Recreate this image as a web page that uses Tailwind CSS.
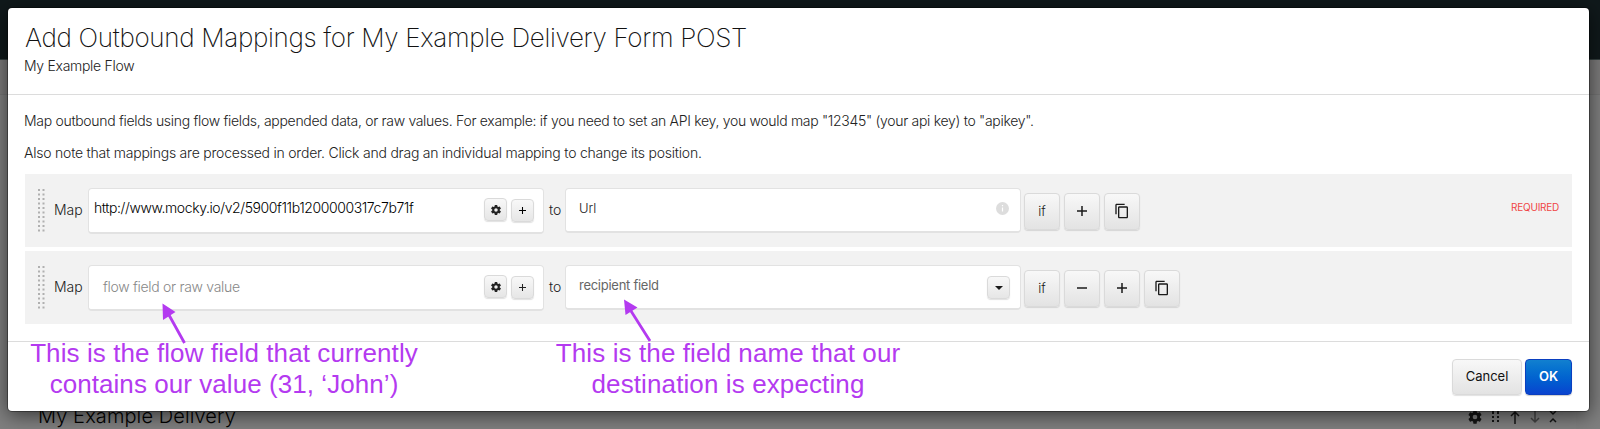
<!DOCTYPE html>
<html lang="en">
<head>
<meta charset="utf-8">
<title>Add Outbound Mappings</title>
<script src="https://cdn.jsdelivr.net/npm/@tailwindcss/browser@4"></script>
</head>
<body class="relative h-[429px] w-[1600px] overflow-hidden bg-[#7f7f7f] font-['Inter',sans-serif] text-[#222]">
<svg class="hidden">
  <symbol id="gear" viewBox="0 0 24 24"><path fill-rule="evenodd" d="M19.43 12.98c.04-.32.07-.64.07-.98s-.03-.66-.07-.98l2.11-1.65c.19-.15.24-.42.12-.64l-2-3.46c-.12-.22-.39-.3-.61-.22l-2.49 1c-.52-.4-1.08-.73-1.69-.98l-.38-2.65C14.46 2.18 14.25 2 14 2h-4c-.25 0-.46.18-.49.42l-.38 2.65c-.61.25-1.17.59-1.69.98l-2.49-1c-.23-.09-.49 0-.61.22l-2 3.46c-.13.22-.07.49.12.64l2.11 1.65c-.04.32-.07.65-.07.98s.03.66.07.98l-2.11 1.65c-.19.15-.24.42-.12.64l2 3.46c.12.22.39.3.61.22l2.49-1c.52.4 1.08.73 1.69.98l.38 2.65c.03.24.24.42.49.42h4c.25 0 .46-.18.49-.42l.38-2.65c.61-.25 1.17-.59 1.69-.98l2.49 1c.23.09.49 0 .61-.22l2-3.46c.12-.22.07-.49-.12-.64l-2.11-1.65zM12 15.5a3.5 3.5 0 1 1 0-7 3.5 3.5 0 0 1 0 7z"/></symbol>
  <symbol id="copy" viewBox="0 0 24 24"><path d="M16 1H4c-1.100 0-2 .9-2 2v14h2V3h12V1zm3 4H8c-1.100 0-2 .9-2 2v14c0 1.100.9 2 2 2h11c1.100 0 2-.9 2-2V7c0-1.100-.9-2-2-2zm0 16H8V7h11v14z"/></symbol>
  <symbol id="plus" viewBox="0 0 10 10"><path d="M5 0v10M0 5h10" fill="none" stroke="currentColor" stroke-width="1.500"/></symbol>
</svg>

<header class="h-[60px] border-b border-[#354040] bg-[#10191b]"></header>
<div class="h-[35px] border-b border-[#747474] bg-[#7c7b7b]"></div>
<div class="ml-5 flex h-[334px] w-[1556px] items-end justify-between bg-[#818181] pr-[16px] pl-[18px]">
  <p class="mb-[1px] text-[20px] leading-[24px] font-light whitespace-nowrap text-black"><span class="tracking-[0.1px]">My Example Delivery</span></p>
  <div class="mb-[4px] flex items-center text-[#151515]">
    <svg class="size-[16px]" fill="currentColor"><use href="#gear"/></svg>
    <svg class="ml-[7px] size-[12px]" viewBox="0 0 12 12" fill="currentColor"><path d="M2 0h2v3H2zM7 0h2v3H7zM2 5h2v2H2zM7 5h2v2H7zM2 9h2v2H2zM7 9h2v2H7z"/></svg>
    <svg class="ml-[6px] size-[14px]" viewBox="0 0 14 14" fill="none" stroke="currentColor" stroke-width="1.500"><path d="M7 14V2M3 6l4-4 4 4"/></svg>
    <svg class="ml-[6px] size-[14px] text-[#444]" viewBox="0 0 14 14" fill="none" stroke="currentColor" stroke-width="1.500"><path d="M7 0v12M3 8l4 4 4-4"/></svg>
    <svg class="ml-[4px] size-[14px]" viewBox="0 0 14 14" fill="none" stroke="currentColor" stroke-width="1.500"><path d="M4 1l3 3 3-3M4 12l3-3 3 3"/></svg>
  </div>
</div>

<main class="absolute top-[8px] left-[8px] flex h-[403px] w-[1581px] flex-col rounded-[4px] bg-white shadow-[0_0_0_1px_rgba(0,0,0,0.35),0_4px_20px_rgba(0,0,0,0.6)]">
  <div class="h-[87px] border-b border-[#dcdcdc] pt-[14px] pl-[17px] whitespace-nowrap">
    <h1 class="h-[32px] text-[26px] leading-[32px] font-extralight tracking-[-0.325px] text-[#111]">Add Outbound Mappings for My Example Delivery Form POST</h1>
    <p class="mt-[2px] -ml-px text-[14px] leading-[20px] font-light tracking-[-0.3px]">My Example Flow</p>
  </div>
  <div class="h-[246px] px-[17px] pt-[16px] text-[14px] font-light whitespace-nowrap">
    <p class="-ml-px h-[20px] leading-[20px] tracking-[-0.305px]">Map outbound fields using flow fields, appended data, or raw values. For example: if you need to set an API key, you would map "12345" (your api key) to "apikey".</p>
    <p class="mt-[12px] -ml-px h-[20px] leading-[20px] tracking-[-0.22px]">Also note that mappings are processed in order. Click and drag an individual mapping to change its position.</p>

    <div class="mt-[11px] flex h-[73px] items-start bg-[#f2f2f2] pl-[13px]">
      <svg class="mt-[15px] h-[43px] w-[7px]" stroke="#b0b0b0" stroke-width="2" stroke-dasharray="2 2.500"><path d="M1 0v43M5.500 0v43"/></svg>
      <span class="mt-[26px] ml-[9px] w-[34px] text-[14px] leading-[20px]">Map</span>
      <div class="mt-[14px] flex h-[46px] w-[456px] rounded-[4px] border border-b-2 border-[#e2e2e2] bg-white pl-[5px] text-black">
        <span class="mt-[9px] w-[390px] text-[14px] leading-[20px] font-light tracking-[-0.41px]">http://www.mocky.io/v2/5900f11b1200000317c7b71f</span>
        <span class="mt-[9px] flex size-[23px] items-center justify-center rounded-[4px] border border-[#dadada] bg-linear-to-b from-[#f8f8f8] to-[#e6e6e6] shadow-[0_1px_1px_rgba(0,0,0,0.12)]"><svg class="size-[12px]" fill="#222"><use href="#gear"/></svg></span>
        <span class="mt-[10px] ml-[4px] flex size-[23px] items-center justify-center rounded-[4px] border border-[#dadada] bg-linear-to-b from-[#f8f8f8] to-[#e6e6e6] shadow-[0_1px_1px_rgba(0,0,0,0.12)]"><svg class="size-[7px]"><use href="#plus"/></svg></span>
      </div>
      <span class="mt-[26px] ml-[5px] w-[16px] leading-[20px]">to</span>
      <div class="mt-[14px] flex h-[45px] w-[456px] justify-between rounded-[4px] border border-b-2 border-[#e2e2e2] bg-white pr-[11px] pl-[13px]">
        <span class="mt-[9px] text-[13px] leading-[20px]">Url</span>
        <svg class="mt-[13px] size-[13px]" viewBox="0 0 13 13"><circle cx="6.500" cy="6.500" r="6.500" fill="#ddd"/><path d="M6.500 5.500v4M6.500 3v1.300" stroke="#fff" stroke-width="1.200"/></svg>
      </div>
      <div class="mt-[19px] ml-[3px] flex gap-[4px] text-[13px] text-[#1a1a1a]">
        <span class="flex h-[37px] w-[36px] items-center justify-center rounded-[4px] border border-[#dadada] bg-linear-to-b from-[#f8f8f8] to-[#e3e3e3] shadow-[0_1px_1px_rgba(0,0,0,0.12)]">if</span>
        <span class="flex h-[37px] w-[36px] items-center justify-center rounded-[4px] border border-[#dadada] bg-linear-to-b from-[#f8f8f8] to-[#e3e3e3] shadow-[0_1px_1px_rgba(0,0,0,0.12)]"><svg class="mb-px size-[10px]"><use href="#plus"/></svg></span>
        <span class="flex h-[37px] w-[36px] items-center justify-center rounded-[4px] border border-[#dadada] bg-linear-to-b from-[#f8f8f8] to-[#e3e3e3] shadow-[0_1px_1px_rgba(0,0,0,0.12)]"><svg class="mb-px size-[16px]" fill="#1a1a1a"><use href="#copy"/></svg></span>
      </div>
      <span class="mt-[26px] mr-[13px] ml-auto text-[10px] leading-[14px] font-normal tracking-[-0.25px] text-[#f04545]">REQUIRED</span>
    </div>

    <div class="mt-[4px] flex h-[73px] items-start bg-[#f2f2f2] pl-[13px]">
      <svg class="mt-[15px] h-[43px] w-[7px]" stroke="#b0b0b0" stroke-width="2" stroke-dasharray="2 2.500"><path d="M1 0v43M5.500 0v43"/></svg>
      <span class="mt-[26px] ml-[9px] w-[34px] text-[14px] leading-[20px]">Map</span>
      <div class="mt-[14px] flex h-[46px] w-[456px] rounded-[4px] border border-b-2 border-[#e2e2e2] bg-white pl-[14px]">
        <span class="mt-[11px] w-[381px] text-[14px] leading-[20px] tracking-[-0.3px] text-[#888]">flow field or raw value</span>
        <span class="mt-[9px] flex size-[23px] items-center justify-center rounded-[4px] border border-[#dadada] bg-linear-to-b from-[#f8f8f8] to-[#e6e6e6] shadow-[0_1px_1px_rgba(0,0,0,0.12)]"><svg class="size-[12px]" fill="#222"><use href="#gear"/></svg></span>
        <span class="mt-[10px] ml-[4px] flex size-[23px] items-center justify-center rounded-[4px] border border-[#dadada] bg-linear-to-b from-[#f8f8f8] to-[#e6e6e6] shadow-[0_1px_1px_rgba(0,0,0,0.12)]"><svg class="size-[7px]"><use href="#plus"/></svg></span>
      </div>
      <span class="mt-[26px] ml-[5px] w-[16px] leading-[20px]">to</span>
      <div class="mt-[14px] flex h-[45px] w-[456px] justify-between rounded-[4px] border border-b-2 border-[#e2e2e2] bg-white pr-[10px] pl-[13px]">
        <span class="mt-[9px] text-[13px] leading-[20px] font-normal tracking-[-0.27px] text-[#666]">recipient field</span>
        <span class="mt-[10px] flex size-[23px] items-center justify-center rounded-[4px] border border-[#dadada] bg-linear-to-b from-[#f8f8f8] to-[#e6e6e6] shadow-[0_1px_1px_rgba(0,0,0,0.12)]"><svg class="h-[4px] w-[8px]" viewBox="0 0 8 4"><path d="M0 0h8L4 4z" fill="#1a1a1a"/></svg></span>
      </div>
      <div class="mt-[19px] ml-[3px] flex gap-[4px] text-[13px] text-[#1a1a1a]">
        <span class="flex h-[37px] w-[36px] items-center justify-center rounded-[4px] border border-[#dadada] bg-linear-to-b from-[#f8f8f8] to-[#e3e3e3] shadow-[0_1px_1px_rgba(0,0,0,0.12)]">if</span>
        <span class="flex h-[37px] w-[36px] items-center justify-center rounded-[4px] border border-[#dadada] bg-linear-to-b from-[#f8f8f8] to-[#e3e3e3] shadow-[0_1px_1px_rgba(0,0,0,0.12)]"><svg class="mb-px h-[2px] w-[10px]"><path d="M0 1h10" stroke="#1a1a1a" stroke-width="1.500"/></svg></span>
        <span class="flex h-[37px] w-[36px] items-center justify-center rounded-[4px] border border-[#dadada] bg-linear-to-b from-[#f8f8f8] to-[#e3e3e3] shadow-[0_1px_1px_rgba(0,0,0,0.12)]"><svg class="mb-px size-[10px]"><use href="#plus"/></svg></span>
        <span class="flex h-[37px] w-[36px] items-center justify-center rounded-[4px] border border-[#dadada] bg-linear-to-b from-[#f8f8f8] to-[#e3e3e3] shadow-[0_1px_1px_rgba(0,0,0,0.12)]"><svg class="mb-px size-[16px]" fill="#1a1a1a"><use href="#copy"/></svg></span>
      </div>
    </div>
  </div>
  <div class="flex h-[70px] justify-end gap-[3px] border-t border-[#dcdcdc] pt-[17px] pr-[17px] text-[13px]">
    <button class="h-[36px] w-[70px] rounded-[4px] border border-[#dadada] bg-linear-to-b from-[#f8f8f8] to-[#e3e3e3] text-[#111] shadow-[0_1px_1px_rgba(0,0,0,0.12)]">Cancel</button>
    <button class="h-[36px] w-[47px] rounded-[4px] border border-[#0a3fc0] bg-linear-to-b from-[#1280cf] to-[#0b43cf] font-semibold text-white shadow-[0_1px_1px_rgba(0,0,0,0.2)]">OK</button>
  </div>
</main>

<p class="absolute top-[338px] left-[8px] w-[432px] text-center font-['Liberation_Sans',sans-serif] text-[26px] leading-[31px] whitespace-nowrap text-[#b43af0]"><span class="tracking-[0.09px]">This is the flow field that currently</span><br><span class="tracking-[0.06px]">contains our value (31, ‘John’)</span></p>
<p class="absolute top-[338px] left-[528px] w-[400px] text-center font-['Liberation_Sans',sans-serif] text-[26px] leading-[31px] tracking-[0.11px] whitespace-nowrap text-[#b43af0]">This is the field name that our<br>destination is expecting</p>
<svg class="absolute inset-0 h-[429px] w-[1600px]" fill="#b43af0" stroke="#b43af0"><path d="M184.500 343 169 315M650 341 631 311" stroke-width="2.800"/><path stroke="none" d="M162.500 303.500l13 8.500-12.500 8zM624 299.500l13.500 8-12 7.500z"/></svg>
</body>
</html>
